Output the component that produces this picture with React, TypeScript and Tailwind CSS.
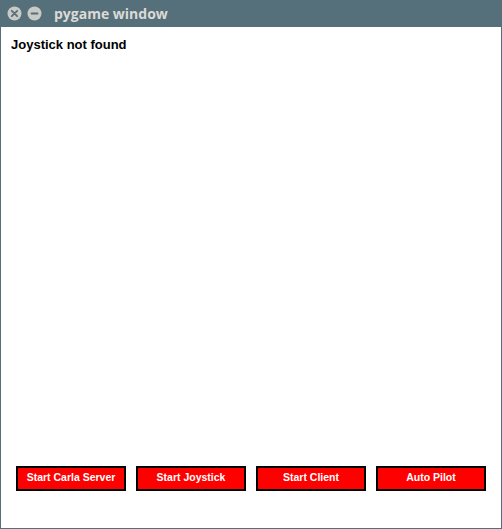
import React from "react";

const buttons = ["Start Carla Server", "Start Joystick", "Start Client", "Auto Pilot"];

function CircleBtn({ kind }: { kind: "close" | "min" }) {
  return (
    <svg width="15" height="15" viewBox="0 0 15 15">
      <circle cx="7.5" cy="7.5" r="7" fill="#c9c9c5" />
      {kind === "close" ? (
        <path d="M4.8 4.8 L10.2 10.2 M10.2 4.8 L4.8 10.2" stroke="#56707b" strokeWidth="1.8" strokeLinecap="round" />
      ) : (
        <path d="M4.5 7.5 L10.5 7.5" stroke="#56707b" strokeWidth="1.8" strokeLinecap="round" />
      )}
    </svg>
  );
}

export default function App() {
  return (
    <div className="w-[502px] h-[529px] flex flex-col bg-white" style={{ fontFamily: '"Liberation Sans", Arial, sans-serif' }}>
      <div className="h-[27px] bg-[#56707b] flex items-center pl-[7px] shrink-0">
        <div className="flex items-center gap-[5px]">
          <CircleBtn kind="close" />
          <CircleBtn kind="min" />
        </div>
        <span
          className="ml-[12px] text-[14px] font-bold text-[#dcdad5]"
          style={{ fontFamily: '"Open Sans", "DejaVu Sans", sans-serif' }}
        >
          pygame window
        </span>
      </div>
      <div className="flex-1 flex flex-col border-l border-r border-b border-[#56707b]">
        <div className="pl-[10px] pt-[10px] text-[13px] font-bold text-black leading-[15px]">Joystick not found</div>
        <div className="mt-auto flex gap-[10px] pl-[15px] mb-[37px]">
          {buttons.map((b) => (
            <div
              key={b}
              className="w-[110px] h-[25px] bg-[#ff0000] border-2 border-black flex items-center justify-center text-white text-[10.5px] font-bold pb-[1px]"
            >
              {b}
            </div>
          ))}
        </div>
      </div>
    </div>
  );
}
